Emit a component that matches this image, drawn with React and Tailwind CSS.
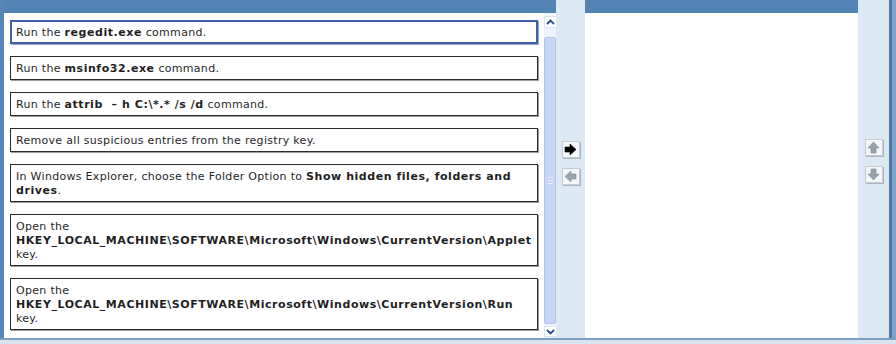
import React from "react";

const font = { fontFamily: '"DejaVu Sans", Verdana, sans-serif' };

function Item({ children, selected }) {
  return (
    <div
      className={
        "bg-white text-[11px] leading-[14px] tracking-[0.3px] text-[#1f1f1f] " +
        (selected
          ? "border-2 border-[#3f62a6] px-[4px] pt-[4px] pb-[2px] shadow-[1px_1px_0_#9aa6bd]"
          : "border border-[#2b2b2b] px-[5px] pt-[5px] pb-[3px] shadow-[1px_1px_0_#9a9a9a]")
      }
    >
      {children}
    </div>
  );
}

function B({ children }) {
  return <b className="tracking-[0.55px]">{children}</b>;
}

function ArrowBtn({ dir, enabled }) {
  const fill = enabled ? "#000" : "#9aa3ad";
  const rot = { right: 0, left: 180, up: -90, down: 90 }[dir];
  return (
    <div className="w-[18px] h-[17px] bg-[#f4f6f8] border border-[#c4ccd6] shadow-[1px_1px_0_#aab4c0] flex items-center justify-center">
      <svg width="13" height="13" viewBox="0 0 13 13" style={{ transform: `rotate(${rot}deg)` }}>
        <polygon points="1,4 6,4 6,1 12,6.5 6,12 6,9 1,9" fill={fill} stroke={enabled ? "#000" : "#7f8893"} strokeWidth="0.6" />
      </svg>
    </div>
  );
}

export default function App() {
  return (
    <div className="w-[896px] h-[344px] flex flex-col bg-white overflow-hidden" style={font}>
      <div className="flex h-[338px]">
        <div className="w-[4px] bg-[#5a86b6]" />
        <div className="w-[552px] flex flex-col">
          <div className="h-[13px] bg-[#5383b5]" />
          <div className="flex flex-1 min-h-0">
            <div className="flex-1 bg-white pl-[6px] pr-[6px] pt-[7px] flex flex-col gap-[12px]">
              <Item selected>
                Run the <B>regedit.exe</B> command.
              </Item>
              <Item>
                Run the <B>msinfo32.exe</B> command.
              </Item>
              <Item>
                Run the <B>attrib &nbsp;– h C:\*.* /s /d</B> command.
              </Item>
              <Item>Remove all suspicious entries from the registry key.</Item>
              <Item>
                In Windows Explorer, choose the Folder Option to <B>Show hidden files, folders and drives</B>.
              </Item>
              <Item>
                Open the
                <br />
                <B>HKEY_LOCAL_MACHINE\SOFTWARE\Microsoft\Windows\CurrentVersion\Applet</B>
                <br />
                key.
              </Item>
              <Item>
                Open the
                <br />
                <B>HKEY_LOCAL_MACHINE\SOFTWARE\Microsoft\Windows\CurrentVersion\Run</B>
                <br />
                key.
              </Item>
            </div>
            <div className="w-[15px] bg-[#eef3fb] flex flex-col items-center pt-[3px] pb-[1px]">
              <div className="w-[13px] h-[12px] bg-white border border-[#dbe4f3] flex items-center justify-center">
                <svg width="9" height="6" viewBox="0 0 9 6">
                  <polyline points="1,5 4.5,1.5 8,5" fill="none" stroke="#2c4a8a" strokeWidth="1.8" />
                </svg>
              </div>
              <div className="mt-[9px] w-[12px] flex-1 bg-[#c7d5f6] border border-[#b3c3ea] rounded-[2px] flex items-center justify-center">
                <div className="flex flex-col gap-[2px]">
                  <div className="w-[5px] h-px bg-[#e9eefb]" />
                  <div className="w-[5px] h-px bg-[#e9eefb]" />
                  <div className="w-[5px] h-px bg-[#e9eefb]" />
                </div>
              </div>
              <div className="mt-[2px] w-[13px] h-[11px] bg-white border border-[#dbe4f3] flex items-center justify-center">
                <svg width="9" height="6" viewBox="0 0 9 6">
                  <polyline points="1,1 4.5,4.5 8,1" fill="none" stroke="#2c4a8a" strokeWidth="1.8" />
                </svg>
              </div>
            </div>
          </div>
        </div>
        <div className="w-[29px] bg-[#dde8f5] flex flex-col items-center pt-[141px] gap-[10px]">
          <ArrowBtn dir="right" enabled />
          <ArrowBtn dir="left" />
        </div>
        <div className="w-[273px] flex flex-col">
          <div className="h-[13px] bg-[#5383b5]" />
          <div className="flex-1 bg-white" />
        </div>
        <div className="w-[31px] bg-[#dde8f5] flex flex-col items-center pt-[139px] gap-[10px]">
          <ArrowBtn dir="up" />
          <ArrowBtn dir="down" />
        </div>
        <div className="w-[3px] bg-[#4a78aa]" />
        <div className="w-[4px] bg-[#7fa2c8]" />
      </div>
      <div className="h-[6px] border-t-2 border-[#7c9fc6] bg-[#d8e4f2]" />
    </div>
  );
}
